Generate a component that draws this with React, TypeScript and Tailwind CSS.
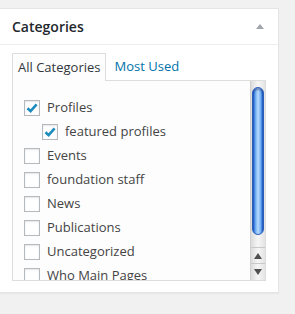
const categories = [
  { name: "Profiles", checked: true, child: false },
  { name: "featured profiles", checked: true, child: true },
  { name: "Events", checked: false, child: false },
  { name: "foundation staff", checked: false, child: false },
  { name: "News", checked: false, child: false },
  { name: "Publications", checked: false, child: false },
  { name: "Uncategorized", checked: false, child: false },
  { name: "Who Main Pages", checked: false, child: false },
];

function Checkbox({ checked }: { checked: boolean }) {
  return (
    <span className="flex h-4 w-4 shrink-0 items-center justify-center border border-[#b4b9be] bg-white shadow-[inset_0_1px_2px_rgba(0,0,0,0.1)]">
      {checked && (
        <svg width="14" height="14" viewBox="0 0 14 14" fill="none">
          <path
            d="M2.5 7.2 L5.6 10.2 L11.6 3.4"
            stroke="#1e8cbe"
            strokeWidth="2.6"
          />
        </svg>
      )}
    </span>
  );
}

function Scrollbar() {
  return (
    <div className="flex w-[15px] shrink-0 flex-col border-l border-[#cfcfcf] bg-[linear-gradient(to_right,#dcdcdc,#f6f6f6_50%,#e4e4e4)]">
      <div className="flex flex-1 flex-col px-px pt-[6px] pb-[12px]">
        <div className="flex-1 rounded-full border border-[#2a5fb8] bg-[linear-gradient(to_right,#1d58c9,#6aaaf3_25%,#bcdcfc_50%,#76b2f5_75%,#1d58c9)] shadow-[inset_0_2px_2px_rgba(0,0,60,0.35)]" />
      </div>
      <div className="flex h-4 items-center justify-center border-t border-[#c9c9c9]">
        <span className="h-0 w-0 border-x-[4px] border-b-[6px] border-x-transparent border-b-[#4f4f4f]" />
      </div>
      <div className="flex h-[17px] items-center justify-center border-t border-[#c9c9c9]">
        <span className="h-0 w-0 border-x-[4px] border-t-[6px] border-x-transparent border-t-[#4f4f4f]" />
      </div>
    </div>
  );
}

export default function App() {
  return (
    <main className="h-[314px] w-[295px] overflow-hidden bg-[#f1f1f1] pt-2 font-['Open_Sans',sans-serif]">
      <section className="w-[279px] border border-l-0 border-[#e5e5e5] bg-white shadow-[0_1px_1px_rgba(0,0,0,0.04)]">
        <header className="flex h-[36px] items-center justify-between border-b border-[#eeeeee] pl-3 pr-[14px]">
          <h2 className="text-[14px] font-semibold text-[#23282d]">Categories</h2>
          <span className="h-0 w-0 border-x-[4px] border-b-[5px] border-x-transparent border-b-[#a0a5aa]" />
        </header>
        <div className="px-3 pt-2 pb-[11px]">
          <div className="flex items-end">
            <div className="relative z-10 -mb-px flex h-[28px] items-center border border-b-0 border-[#dddddd] bg-[#fdfdfd] px-[5px] text-[13px] text-[#32373c]">
              All Categories
            </div>
            <div className="ml-[8px] flex h-[27px] items-center text-[13px] text-[#0073aa]">
              Most Used
            </div>
          </div>
          <div className="flex h-[201px] border border-[#dddddd] bg-[#fdfdfd]">
            <ul className="flex-1 overflow-hidden pt-[15px] pl-[11px]">
              {categories.map((c) => (
                <li
                  key={c.name}
                  className={[
                    "flex h-6 items-center gap-[7px] text-[13px] text-[#444444]",
                    c.child ? "pl-[18px]" : "",
                  ].join(" ")}
                >
                  <Checkbox checked={c.checked} />
                  <span className="whitespace-nowrap">{c.name}</span>
                </li>
              ))}
            </ul>
            <Scrollbar />
          </div>
        </div>
      </section>
    </main>
  );
}
